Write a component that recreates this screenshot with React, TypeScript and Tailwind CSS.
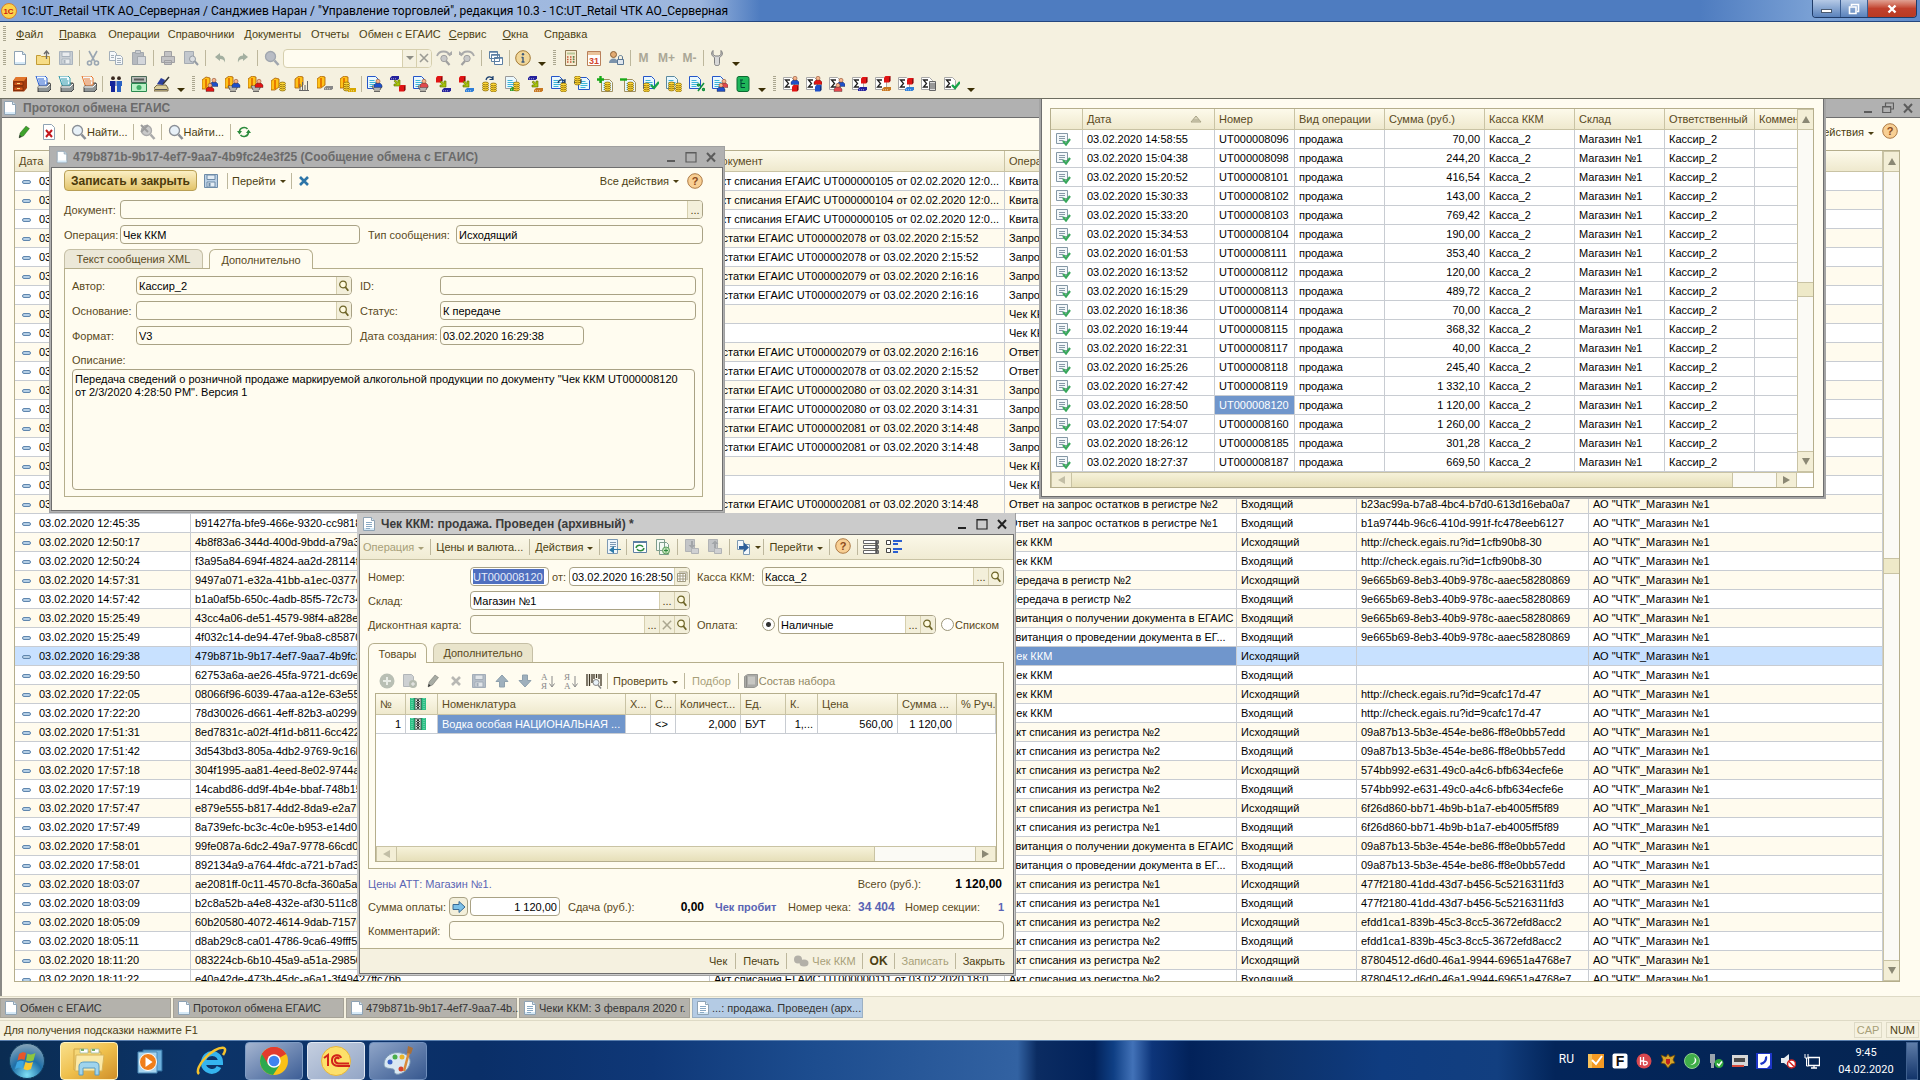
import React from 'react'

type Part = [name: string, x?: number, y?: number, color?: string]

// Small shapes that the toolbar pictures are assembled from, on a 16x16 field
const PartShape = ({ part }: { part: Part }) => {
  const [name, x = 0, y = 0, color = '#2456c9'] = part
  switch (name) {
    case 'doc':
      return (
        <g transform={`translate(${x} ${y})`}>
          <path d="M.5 .5h8l3 3v9h-11z" fill="#eaf8fd" stroke={color} />
          <path d="M2.5 4.5h5M2.5 6.5h7M2.5 8.5h7M2.5 10.5h5" stroke="#3cb4d8" />
        </g>
      )
    case 'page':
      return (
        <g transform={`translate(${x} ${y})`}>
          <path d="M.5 .5h8l3 3v9h-11z" fill="#fff" stroke="#a8a8a8" />
          <path d="M7 3H2.5l3 3.5-3 3.5H7" fill="none" stroke="#222" strokeWidth="1.3" />
        </g>
      )
    case 'man':
      return (
        <g transform={`translate(${x} ${y})`}>
          <path d="M0 8.5V6l2-2h4l2 2v2.5z" fill={color} stroke="#222a" strokeWidth=".5" />
          <circle cx="4" cy="2.3" r="2" fill="#f7b48c" stroke="#7a3b1a" strokeWidth=".5" />
        </g>
      )
    case 'coins':
      return (
        <g transform={`translate(${x} ${y})`} fill="#ffd83a" stroke="#8a6a00" strokeWidth=".8">
          <ellipse cx="3.5" cy="7.5" rx="3" ry="1.4" />
          <ellipse cx="3.5" cy="5.5" rx="3" ry="1.4" />
          <ellipse cx="3.5" cy="3.5" rx="3" ry="1.4" />
          <ellipse cx="3.5" cy="1.5" rx="3" ry="1.4" />
        </g>
      )
    case 'gold':
      return (
        <g transform={`translate(${x} ${y})`}>
          <path d="M0 3l4-3 4 1v8l-4 3H0z" fill="#ffc21a" stroke="#a85a00" strokeWidth=".8" />
          <path d="M4 2v9" stroke="#e77a00" strokeWidth="2" />
        </g>
      )
    case 'cart':
      return (
        <path
          transform={`translate(${x} ${y})`}
          d="M0 0h10l-2 4H2zM2 5.5h6M1 2h8"
          fill="#fff"
          stroke="#444"
          strokeWidth=".8"
        />
      )
    case 'cube':
      return (
        <g transform={`translate(${x} ${y})`}>
          <path d="M0 1.5L1.5 0H6.5V5L5 6.5H0z" fill={color} />
          <path d="M5 6.5V1.5L6.5 0V5z" fill="#0006" />
        </g>
      )
    case 'slab':
      return (
        <g transform={`translate(${x} ${y})`}>
          <path d="M0 2l2-2h7v2.5L7.5 4H0z" fill={color} />
          <path d="M1 2.8h6" stroke="#fff9" strokeDasharray="1 1" />
        </g>
      )
    case 'arrow':
      return (
        <path
          transform={`translate(${x} ${y})`}
          d="M0 1l1.5-1L4 2.5V0h2v6H0V4h2.5z"
          fill="#a8c40a"
          stroke="#5c6b00"
          strokeWidth=".6"
        />
      )
    case 'turn':
      return (
        <path
          transform={`translate(${x} ${y})`}
          d="M0 4C1 0 5 0 7 3M7 0v3.5H3.5"
          fill="none"
          stroke="#1b3f6e"
          strokeWidth="1.2"
        />
      )
    case 'check':
      return <path transform={`translate(${x} ${y})`} d="M0 3l3 3 5-6" fill="none" stroke="#16a34a" strokeWidth="2.4" />
    case 'plus':
      return <path d="M3.5 0v7M0 3.5h7" stroke="#17a817" strokeWidth="2.4" />
    case 'minus':
      return <path d="M0 3.5h7" stroke="#17a817" strokeWidth="2.4" />
    case 'percent':
      return (
        <g transform={`translate(${x} ${y})`} fill="none" stroke="#11903b" strokeWidth="1.5">
          <path d="M7 0L1 8" />
          <circle cx="1.5" cy="2" r="1" />
          <circle cx="6.5" cy="6.5" r="1" />
        </g>
      )
    case 'lines':
      return (
        <g transform={`translate(${x} ${y})`}>
          <path d="M.5 .5h6v9h-6z" fill="#ddd" stroke="#666" />
          <path d="M0 3h7M0 5h7M0 7h7" stroke="#555" />
        </g>
      )
    case 'pens':
      return <path transform={`translate(${x} ${y})`} d="M1 9V3M3.5 9V1M6 9V4M8.5 9V0M0 9.5h10" stroke="#666" fill="none" />
    case 'printer':
      return (
        <g>
          <path d="M3 11l3-4h9l1 4v2l-3 3H3z" fill="#8f9596" stroke="#222" strokeWidth=".8" />
          <path d="M3 11h9l3-3" stroke="#fff" fill="none" />
          <path d="M1 0h9l2 2v7H4z" fill="#f3fbff" stroke={color} />
          <path d="M3 3h6M3.5 5h7M4 7h6" stroke={color} />
        </g>
      )
    case 'tree':
      return (
        <g>
          <rect x="2" y=".5" width="12" height="15" rx="2" fill="#1fb65a" stroke="#0a6b30" />
          <path d="M6 4v7.5h4M6 7.5h4M5 4h3" stroke="#043" fill="none" />
        </g>
      )
    default:
      return null
  }
}

const Pic = ({ parts }: { parts: Part[] }) => (
  <svg viewBox="0 0 16 16" className="h-4 w-4 shrink-0">
    {parts.map((part, i) => (
      <PartShape key={i} part={part} />
    ))}
  </svg>
)

const RED = '#e01414'
const BLUE = '#1e50c8'
const PINK = '#e0484e'
const NAVY = '#24219c'

const SALES: Part[][] = [
  [['gold', 0, 1], ['man', 8, 2, BLUE], ['man', 4, 7, RED]],
  [['gold', 0, 0], ['cart', 3, 10], ['man', 7, 3, BLUE]],
  [['gold', 0, 0], ['cart', 3, 10], ['man', 7, 3, RED]],
  [['gold', 0, 2], ['coins', 8, 6]],
  [['gold', 1, 0], ['pens', 5, 5]],
  [['gold', 0, 0], ['slab', 7, 10, '#888']],
  [['gold', 0, 0], ['coins', 3, 6], ['slab', 8, 12, '#d8a800']],
]

const DOCS: Part[][] = [
  [['doc', 0, 0], ['cart', 5, 10], ['man', 7, 3, BLUE]],
  [['slab', 0, 0, NAVY], ['arrow', 4, 4], ['cube', 9, 9, RED]],
  [['doc', 0, 0], ['cart', 5, 10], ['man', 7, 3, PINK]],
  [['cube', 0, 0, RED], ['arrow', 4, 5], ['slab', 6, 12, NAVY]],
  [['cube', 0, 0, RED], ['arrow', 4, 5], ['slab', 6, 12, '#2f7fd8']],
  [['coins', 0, 6], ['coins', 8, 7], ['turn', 4, 0]],
  [['doc', 0, 0, '#9a9a9a'], ['slab', 5, 11, '#2fa02f'], ['coins', 8, 6]],
  [['slab', 0, 0, NAVY], ['arrow', 4, 5], ['slab', 6, 12, '#c87820']],
  [['doc', 0, 0], ['turn', 7, 3], ['coins', 9, 7]],
  [['doc', 4, 1], ['turn', 0, 3], ['coins', 0, 0]],
  [['doc', 4, 3, '#a09060'], ['plus'], ['coins', 7, 6]],
  [['doc', 4, 3, '#a09060'], ['minus'], ['coins', 7, 6]],
  [['doc', 0, 0], ['coins', 0, 7], ['check', 8, 6]],
  [['doc', 0, 0, '#5a8aa0'], ['coins', 2, 6], ['coins', 9, 7]],
  [['doc', 0, 0], ['percent', 8, 7]],
  [['doc', 0, 0], ['man', 8, 3, PINK], ['man', 5, 7, BLUE]],
  [['tree']],
]

const REPORTS: Part[][] = [
  [['page', 0, 1], ['man', 8, 0, BLUE], ['cube', 9, 9, RED]],
  [['page', 0, 1], ['man', 8, 0, RED], ['cube', 9, 9, BLUE]],
  [['page', 0, 1], ['man', 8, 2, BLUE], ['man', 5, 7, PINK]],
  [['page', 0, 1], ['cube', 9, 1, RED], ['slab', 6, 11, NAVY]],
  [['page', 0, 1], ['cube', 9, 0, RED], ['slab', 7, 11, '#c87820']],
  [['page', 0, 1], ['cube', 9, 2, RED], ['slab', 7, 11, '#2f7fd8']],
  [['page', 0, 1], ['lines', 8, 5]],
  [['page', 0, 1], ['check', 8, 6]],
]

const NewIcon = ({ lined = false, className = 'h-4 w-4' }) => (
  <svg viewBox="0 0 16 16" className={`${className} shrink-0`}>
    <path d="M2.5 1.5h8l3 3v10h-11z" fill="#fff" stroke="#8fa3b4" />
    <path d="M3 12h10v2H3z" fill="#d5e9f7" />
    <path d="M10.5 1.5v3h3" fill="#dcebf5" stroke="#8fa3b4" />
    {lined && <path d="M5 6.5h6M5 8.5h6M5 10.5h6M5 12.5h4" stroke="#8aa9c4" />}
  </svg>
)

const OpenIcon = () => (
  <svg viewBox="0 0 16 16" className="h-4 w-4">
    <path d="M1.5 5.5h4l1 1h8v8h-13z" fill="#f7dc85" stroke="#c29b35" />
    <path d="M11.5 9V2M9 4l2.5-3L14 4" fill="none" stroke="#6b6b6b" strokeWidth="1.3" />
  </svg>
)

const SaveIcon = ({ color = '#a9b3bd', inner = '#c9cfd4' }) => (
  <svg viewBox="0 0 16 16" className="h-4 w-4 shrink-0">
    <path d="M1.5 1.5h13v13h-13z" fill={inner} stroke={color} />
    <path d="M4 2h8v4.5H4zM4 9h8v5H4z" fill="#fff9" stroke={color} />
    <path d="M5.5 10v3.5h2V10z" fill={color} />
  </svg>
)

const CutIcon = () => (
  <svg viewBox="0 0 16 16" className="h-4 w-4" fill="none" stroke="#9aa6b2" strokeWidth="1.6">
    <path d="M4 1l5.5 10M12 1L6.5 11" />
    <circle cx="4.5" cy="13" r="2" />
    <circle cx="11.5" cy="13" r="2" />
  </svg>
)

const CopyIcon = () => (
  <svg viewBox="0 0 16 16" className="h-4 w-4" fill="#f6f8fa" stroke="#a3afba">
    <path d="M1.5 1.5h5l2 2v7h-7z" />
    <path d="M7.5 5.5h5l2 2v7h-7z" />
    <path d="M9 8.5h4M9 10.5h4M9 12.5h4M3 5.5h3M3 7.5h3" />
  </svg>
)

const PasteIcon = () => (
  <svg viewBox="0 0 16 16" className="h-4 w-4">
    <path d="M1.5 2.5h11v12h-11z" fill="#b5b9bf" stroke="#a3a8ae" />
    <path d="M4.5 .5h5v3h-5z" fill="#c9ccd0" stroke="#a3a8ae" />
    <path d="M6.5 6.5h8v8h-8z" fill="#d3d6db" stroke="#a3a8ae" />
  </svg>
)

const PostIcon = ({ up = false }) => (
  <svg viewBox="0 0 16 16" className="h-4 w-4">
    <path d="M1.5 .5h9v12h-9z" fill="#c3c5c7" stroke="#b1b3b5" />
    <path d="M7.5 9.5h7v5h-7z" fill="#cfd0d2" stroke="#b1b3b5" />
    <path d={up ? 'M7 9V5H4.500L8 1.500 11.500 5H9v4z' : 'M7 2v4H4.500L8 9.500 11.500 6H9V2z'} fill="#a2a5a8" />
  </svg>
)

const BookIcon = () => (
  <svg viewBox="0 0 16 16" className="h-4 w-4">
    <path d="M1.5 3.5l3-2h10v11l-3 2h-10z" fill="#a9a9a6" stroke="#979792" />
    <path d="M5 3.5h7v8H5z" fill="#c7c7c3" />
    <path d="M3.5 3v11" stroke="#8c8c88" />
  </svg>
)

const PrintIcon = () => (
  <svg viewBox="0 0 16 16" className="h-4 w-4" fill="#c3c3c5" stroke="#a0a0a3">
    <path d="M4.5 1.5h7v5h-7zM1.5 6.5h13v6h-13zM4.5 10.5h7v4h-7z" />
  </svg>
)

const PreviewIcon = () => (
  <svg viewBox="0 0 16 16" className="h-4 w-4">
    <path d="M1.5 1.5h9v12h-9z" fill="#c3c8ce" stroke="#a5abb2" />
    <circle cx="9.5" cy="9" r="3" fill="#dadde0" stroke="#959ca4" />
    <path d="M11.5 11l3.5 4" stroke="#959ca4" strokeWidth="2" />
  </svg>
)

const UndoIcon = ({ flip = false }) => (
  <svg viewBox="0 0 16 16" className={flip ? 'h-4 w-4 -scale-x-100' : 'h-4 w-4'}>
    <path d="M3 7l5-4v2.5c4 0 5.5 3 5 7-1-3-2.5-3.5-5-3.5v2z" fill="#a3afa0" />
  </svg>
)

const LensIcon = ({ glass = '#c4cfd6', rim = '#9aa4ac', crossed = false }) => (
  <svg viewBox="0 0 16 16" className="h-4 w-4 shrink-0">
    <circle cx="6.5" cy="6.5" r="5" fill={glass} stroke={rim} strokeWidth="1.3" />
    <path d="M10.5 10.5l4 4.5" stroke={rim} strokeWidth="2.6" />
    {crossed && <path d="M1 1l7 7M8 1L1 8" stroke="#9c9c9c" strokeWidth="2" />}
  </svg>
)

const SearchAgainIcon = ({ flip = false }) => (
  <svg viewBox="0 0 16 16" className={flip ? 'h-4 w-4 -scale-x-100' : 'h-4 w-4'}>
    <path d="M1 6c2-6 11-6 13 0" fill="none" stroke="#aaa" strokeWidth="1.8" />
    <path d="M11 5h5v-4z" fill="#aaa" />
    <circle cx="8" cy="8.5" r="3.2" fill="#c8c8c8" stroke="#a0a0a0" />
    <path d="M10 11l3.5 4" stroke="#a0a0a0" strokeWidth="2.2" />
  </svg>
)

const WindowsIcon = () => (
  <svg viewBox="0 0 16 16" className="h-4 w-4" fill="#fff" stroke="#5c7fa3">
    <path d="M1.5 1.5h8v7h-8zM3.5 4.5h8v7h-8zM6.5 7.5h8v7h-8z" />
    <path d="M1.5 2h8M3.5 5h8M6.5 8h8" strokeWidth="1.5" />
  </svg>
)

const InfoIcon = () => (
  <svg viewBox="0 0 16 16" className="h-4 w-4">
    <circle cx="8" cy="8" r="7.3" fill="#f1d79a" stroke="#a37a35" />
    <path d="M8 7v5M6.5 7.5H8M6.5 12h3" stroke="#3e5a7a" strokeWidth="1.4" />
    <circle cx="8" cy="4.3" r="1.2" fill="#3e5a7a" />
  </svg>
)

const CalcIcon = () => (
  <svg viewBox="0 0 16 16" className="h-4 w-4">
    <path d="M2.5 .5h11v15h-11z" fill="#f7ecd0" stroke="#8f7a55" />
    <path d="M4 3.5h8" stroke="#b9c79a" strokeWidth="2" />
    <path d="M4 7h8M4 9.5h8M4 12h8" stroke="#c25638" strokeWidth="1.5" strokeDasharray="1.5 1.5" />
    <path d="M10.5 6v7" stroke="#4b9157" strokeWidth="1.5" strokeDasharray="1.5 1" />
  </svg>
)

const CalendarIcon = () => (
  <svg viewBox="0 0 16 16" className="h-4 w-4">
    <path d="M1.5 1.5h13v14h-13z" fill="#fff" stroke="#b9805a" />
    <path d="M2 2h12v3H2z" fill="#eac39a" />
    <text x="8" y="14" fontSize="9" textAnchor="middle" fill="#d4452a" fontFamily="Liberation Sans, sans-serif" fontWeight="bold">
      31
    </text>
  </svg>
)

const UserLockIcon = () => (
  <svg viewBox="0 0 16 16" className="h-4 w-4">
    <path d="M0 13c0-6 9-6 9 0z" fill="#7a92ab" />
    <circle cx="4.5" cy="4.5" r="3" fill="#e2ab72" stroke="#8a6135" />
    <path d="M8.5 9.5h6v5h-6z" fill="#dfe6ed" stroke="#5c7894" />
    <path d="M9.5 9.5V7c0-2 4-2 4 0v2.5" fill="none" stroke="#5c7894" />
  </svg>
)

const WrenchIcon = () => (
  <svg viewBox="0 0 16 16" className="h-4 w-4">
    <path
      d="M4 .5v4l2 1.500h4l2-1.500v-4c2 2 2 5-1.500 7v6c0 3-5 3-5 0v-6C2 5.500 2 2.500 4 .5z"
      fill="#d8d8d8"
      stroke="#7d7d7d"
    />
  </svg>
)

const CabinetIcon = () => (
  <svg viewBox="0 0 16 16" className="h-4 w-4">
    <path d="M1 5l3-4h11v11l-3 3.5H1z" fill="#a33c10" />
    <path d="M4 1h11l-3 4H1z" fill="#e2762c" />
    <path d="M2 6h9v3.5H2zM2 11h9v3.5H2z" fill="#d1541a" stroke="#6d2404" strokeWidth=".7" />
    <path d="M5 7.5h3M5 12.5h3" stroke="#ffe08a" />
  </svg>
)

const PeopleIcon = () => (
  <svg viewBox="0 0 16 16" className="h-4 w-4">
    <circle cx="5" cy="2.2" r="1.9" fill="#3a2a20" />
    <circle cx="11" cy="2.2" r="1.9" fill="#3a2a20" />
    <path d="M2 5h5.5v5H7v6H3v-6H2z" fill="#14259a" />
    <path d="M8.5 5H14v5h-1v6H9v-6h-.5z" fill="#2a62c4" />
  </svg>
)

const MoneyIcon = () => (
  <svg viewBox="0 0 16 16" className="h-4 w-4">
    <path d="M.5 .5h15v6H.5z" fill="#b8bcb8" stroke="#4a6a58" />
    <path d="M.5 7.5h15v8H.5z" fill="#baf0c6" stroke="#2a8a50" />
    <path d="M3 3.5h10" stroke="#5b5b5b" strokeWidth="2" />
    <circle cx="8" cy="11.5" r="2.5" fill="#3fae66" />
  </svg>
)

const RegisterIcon = () => (
  <svg viewBox="0 0 16 16" className="h-4 w-4">
    <path d="M0 12l3-3h9l2 3v3H0z" fill="#dccf9a" stroke="#55482a" strokeWidth=".8" />
    <path d="M3 8l4-6 4 2-2 5z" fill="#2b3f9e" />
    <path d="M9 8l6-7" stroke="#333" strokeWidth="1.5" />
    <path d="M1 13.5h12" stroke="#555" />
  </svg>
)

const LoupeIcon = () => (
  <svg viewBox="0 0 12 12" className="h-3 w-3">
    <circle cx="5" cy="4.5" r="3.3" fill="#fffbe0" stroke="#6d6427" strokeWidth="1.2" />
    <path d="M7.3 7l3 3.8" stroke="#6d6427" strokeWidth="1.8" />
  </svg>
)

const HelpButton = () => (
  <button type="button" aria-label="Справка" className="h-4 w-4 shrink-0">
    <svg viewBox="0 0 16 16" className="h-4 w-4">
      <circle cx="8" cy="8" r="7.3" fill="#f8cf94" stroke="#ad7a45" />
      <text x="8" y="12" fontSize="11" textAnchor="middle" fill="#8b4a1c" fontFamily="Liberation Sans, sans-serif" fontWeight="bold">
        ?
      </text>
    </svg>
  </button>
)

const PencilIcon = ({ color = '#3fa32c' }) => (
  <svg viewBox="0 0 16 16" className="h-4 w-4">
    <path d="M3 14l1-5 6-7 3.5 2.5-6 7.5z" fill={color} stroke="#0005" strokeWidth=".7" />
    <path d="M3 14l.7-3 2 1.5z" fill="#333" />
  </svg>
)

const DeleteIcon = () => (
  <svg viewBox="0 0 16 16" className="h-4 w-4">
    <path d="M2.5 .5h8l3 3v12h-11z" fill="#fff" stroke="#8fa3b4" />
    <path d="M5 6l6 7M11 6l-6 7" stroke="#c3171c" strokeWidth="2" />
  </svg>
)

const RefreshIcon = () => (
  <svg viewBox="0 0 16 16" className="h-4 w-4" fill="none" stroke="#2c8b3c" strokeWidth="1.6">
    <path d="M3.5 8c0-5 6-5.500 8-3M12.5 8c0 5-6 5.500-8 3" />
    <path d="M1 7h5l-2.500 3.500zM10 9h5l-2.500-3.500z" fill="#2c8b3c" stroke="none" />
  </svg>
)

const CrossIcon = ({ color = '#2d75a8' }) => (
  <svg viewBox="0 0 12 12" className="h-3 w-3">
    <path d="M2 2l8 8M10 2l-8 8" stroke={color} strokeWidth="2.6" />
  </svg>
)

const ArrowIcon = ({ down = false }) => (
  <svg viewBox="0 0 16 16" className={down ? 'h-4 w-4 rotate-180' : 'h-4 w-4'}>
    <path d="M8 2l6 6.5h-3.5V14h-5V8.5H2z" fill="#9fb0bd" stroke="#8ea0ad" />
  </svg>
)

const Sep = ({ wide = false }) => (
  <span className={`flex justify-center shrink-0 ${wide ? 'w-[6px]' : 'w-1'}`}>
    <span className="h-4 w-px bg-[#bdb79c]" />
  </span>
)

const Grip = ({ first = false }) => (
  <span
    className={`h-4 w-[3px] shrink-0 bg-[repeating-linear-gradient(180deg,#aaa68f_0,#aaa68f_1px,transparent_1px,transparent_2px)] ${
      first ? 'mr-[2px] ml-[3px]' : 'mr-[3px] ml-1'
    }`}
  />
)

const More = () => (
  <span className="flex h-4 w-[15px] shrink-0 items-end justify-center">
    <span className="border-x-4 border-t-4 border-x-transparent border-t-[#3b2f05]" />
  </span>
)

const Tool = ({ label, children }: { label: string; children: React.ReactNode }) => (
  <button type="button" aria-label={label} className="flex h-5 w-[23px] shrink-0 items-center justify-center">
    {children}
  </button>
)

const Caret = ({ faded = false, tight = false }) => (
  <span
    className={`inline-block border-x-[3px] border-t-[3px] border-x-transparent align-middle ${tight ? '' : 'ml-1'} ${
      faded ? 'border-t-[#a79f78]' : 'border-t-[#4c3f12]'
    }`}
  />
)

const MENU: [before: string, hot: string, after: string, margin: string][] = [
  ['', 'Ф', 'айл', 'ml-2'],
  ['', 'П', 'равка', 'ml-4'],
  ['Операции', '', '', 'ml-3'],
  ['Справочники', '', '', 'ml-2'],
  ['Документы', '', '', 'ml-[10px]'],
  ['Отчеты', '', '', 'ml-[10px]'],
  ['Обмен с ЕГАИС', '', '', 'ml-[10px]'],
  ['', 'С', 'ервис', 'ml-2'],
  ['', 'О', 'кна', 'ml-4'],
  ['Сп', 'р', 'авка', 'ml-4'],
]

const TitleBar = () => (
  <header className="flex h-[22px] shrink-0 items-start border-b border-[#24477f] bg-[linear-gradient(90deg,#86a5d6_0,#a3bbe0_400px,#9cb6de_700px,#4e7cc0_760px,#4e7cc0_1700px,#7da3d6_1820px,#5f8bca_100%)]">
    <div className="flex h-[21px] flex-1 items-center gap-1 pl-[1px]">
      <svg viewBox="0 0 16 16" className="h-4 w-4">
        <circle cx="8" cy="8" r="7.5" fill="#fbd34a" stroke="#d9822b" />
        <text x="7.5" y="11" fontSize="8" textAnchor="middle" fill="#cc1a12" fontFamily="Liberation Sans, sans-serif" fontWeight="bold">
          1C
        </text>
      </svg>
      <h1 className="font-['Roboto','Noto_Sans',sans-serif] text-[12px] whitespace-nowrap text-black">
        1C:UT_Retail ЧТК АО_Серверная / Санджиев Наран / "Управление торговлей", редакция 10.3 - 1C:UT_Retail ЧТК АО_Серверная
      </h1>
    </div>
    <div className="mr-[3px] flex h-[18px] overflow-hidden rounded-b border border-t-0 border-[#1f3b68]">
      <button type="button" aria-label="Свернуть" className="flex w-7 items-center justify-center border-r border-[#3a5c90] bg-linear-to-b from-[#b5c9e6] to-[#5a82bb]">
        <span className="mt-1 h-1 w-[11px] border border-[#4a5a70] bg-white" />
      </button>
      <button type="button" aria-label="Развернуть" className="flex w-[27px] items-center justify-center border-r border-[#3a5c90] bg-linear-to-b from-[#b5c9e6] to-[#5a82bb]">
        <svg viewBox="0 0 12 12" className="h-3 w-3" fill="none" stroke="#fff" strokeWidth="1.6">
          <path d="M3.5 3V1.5h7v7H9M1.5 4h6.5v6.5H1.5z" />
        </svg>
      </button>
      <button type="button" aria-label="Закрыть" className="flex w-12 items-center justify-center bg-linear-to-b from-[#e0a193] via-[#c1402c] to-[#b93a22]">
        <svg viewBox="0 0 12 12" className="h-3 w-3">
          <path d="M2.5 2.5l7 7M9.5 2.5l-7 7" stroke="#fff" strokeWidth="2.4" />
        </svg>
      </button>
    </div>
  </header>
)

const Toolbars = () => (
  <div className="shrink-0 border-b border-[#6d6d60] bg-[#f5f1e0]">
    <nav className="flex h-6 items-center">
      <Grip first />
      {MENU.map(([before, hot, after, margin]) => (
        <a key={before + hot + after} href="#" className={`${margin} text-[#4c3f12]`}>
          {before}
          <span className="underline">{hot}</span>
          {after}
        </a>
      ))}
    </nav>
    <div className="flex h-6 items-center">
      <Grip first />
      <div className="flex items-center">
        <Tool label="Новый"><NewIcon /></Tool>
        <Tool label="Открыть"><OpenIcon /></Tool>
        <Tool label="Сохранить"><SaveIcon /></Tool>
        <Sep />
        <Tool label="Вырезать"><CutIcon /></Tool>
        <Tool label="Копировать"><CopyIcon /></Tool>
        <Tool label="Вставить"><PasteIcon /></Tool>
        <Sep wide />
        <Tool label="Печать"><PrintIcon /></Tool>
        <Tool label="Просмотр"><PreviewIcon /></Tool>
        <Sep wide />
        <Tool label="Отменить"><UndoIcon /></Tool>
        <Tool label="Вернуть"><UndoIcon flip /></Tool>
        <Sep wide />
        <Tool label="Найти"><LensIcon glass="#b8bcc4" rim="#a0a6ae" /></Tool>
      </div>
      <div className="flex h-[19px] w-[149px] overflow-hidden rounded border border-[#d6cfae] bg-[#fffcf0]">
        <input aria-label="Поиск" className="min-w-0 flex-1 bg-transparent px-1 outline-none" />
        <button type="button" aria-label="Список" className="flex w-[14px] items-center justify-center border-l border-[#d6cfae] bg-[#f5f1e0]">
          <span className="border-x-4 border-t-4 border-x-transparent border-t-[#8e8e86]" />
        </button>
        <button type="button" aria-label="Очистить" className="flex w-[15px] items-center justify-center border-l border-[#d6cfae] bg-[#f5f1e0]">
          <svg viewBox="0 0 12 12" className="h-3 w-3"><path d="M2 2l8 8M10 2l-8 8" stroke="#9b9b94" strokeWidth="1.6" /></svg>
        </button>
      </div>
      <Tool label="Найти следующий"><SearchAgainIcon /></Tool>
      <Tool label="Найти предыдущий"><SearchAgainIcon flip /></Tool>
      <Sep wide />
      <Tool label="Окна"><WindowsIcon /></Tool>
      <Sep />
      <Tool label="Справка"><InfoIcon /></Tool>
      <More />
      <Grip />
      <Tool label="Калькулятор"><CalcIcon /></Tool>
      <Tool label="Календарь"><CalendarIcon /></Tool>
      <Tool label="Пользователь"><UserLockIcon /></Tool>
      <Sep />
      <div className="flex text-[12px] font-bold text-[#aaa796]">
        <button type="button" className="w-[23px]">M</button>
        <button type="button" className="w-[23px]">M+</button>
        <button type="button" className="w-[23px]">M-</button>
      </div>
      <Sep />
      <Tool label="Сервис"><WrenchIcon /></Tool>
      <More />
    </div>
    <div className="flex h-7 items-center">
      <Grip first />
      <Tool label="Константы"><CabinetIcon /></Tool>
      <Tool label="Печать таблицы"><Pic parts={[['printer', 0, 0, '#2a5ed0']]} /></Tool>
      <Tool label="Печать документа"><Pic parts={[['printer', 0, 0, '#2f97a8']]} /></Tool>
      <Tool label="Печать ценников"><Pic parts={[['printer', 0, 0, '#e8742a']]} /></Tool>
      <Sep />
      <Tool label="Контрагенты"><PeopleIcon /></Tool>
      <Tool label="Касса"><MoneyIcon /></Tool>
      <Tool label="Рабочее место"><RegisterIcon /></Tool>
      <More />
      <Grip />
      {SALES.map((parts, i) => (
        <Tool key={i} label={`Журнал ${i + 1}`}><Pic parts={parts} /></Tool>
      ))}
      <Sep />
      {DOCS.map((parts, i) => (
        <Tool key={i} label={`Документ ${i + 1}`}><Pic parts={parts} /></Tool>
      ))}
      <More />
      <Grip />
      {REPORTS.map((parts, i) => (
        <Tool key={i} label={`Отчет ${i + 1}`}><Pic parts={parts} /></Tool>
      ))}
      <More />
    </div>
  </div>
)

const ACT = 'Акт списания из регистра №'
const IN = 'Входящий'
const OUT = 'Исходящий'
const CHECK_1 = 'http://check.egais.ru?id=1cfb90b8-30'
const CHECK_2 = 'http://check.egais.ru?id=9cafc17d-47'
const G9E = '9e665b69-8eb3-40b9-978c-aaec58280869'
const G09 = '09a87b13-5b3e-454e-be86-ff8e0bb57edd'
const GOT = 'Квитанция о получении документа в ЕГАИС'
const DONE = 'Квитанция о проведении документа в ЕГ...'
const ASK = 'Запрос остатков в регистре'
const REPLY = 'Ответ на запрос остатков'

const rest = (n: string, time: string) => `Остатки ЕГАИС UT00000${n} от 03.02.2020 ${time}`

// time, id, document, operation, direction, reply id
const EXCHANGE: string[][] = [
  ['', '', 'Акт списания ЕГАИС UT000000105 от 02.02.2020 12:0...', GOT, '', ''],
  ['', '', 'Акт списания ЕГАИС UT000000104 от 02.02.2020 12:0...', GOT, '', ''],
  ['', '', 'Акт списания ЕГАИС UT000000105 от 02.02.2020 12:0...', GOT, '', ''],
  ['', '', rest('2078', '2:15:52'), ASK, '', ''],
  ['', '', rest('2078', '2:15:52'), ASK, '', ''],
  ['', '', rest('2079', '2:16:16'), ASK, '', ''],
  ['', '', rest('2079', '2:16:16'), ASK, '', ''],
  ['', '', '', 'Чек ККМ', '', ''],
  ['', '', '', 'Чек ККМ', '', ''],
  ['', '', rest('2079', '2:16:16'), REPLY, '', ''],
  ['', '', rest('2078', '2:15:52'), REPLY, '', ''],
  ['', '', rest('2080', '3:14:31'), ASK, '', ''],
  ['', '', rest('2080', '3:14:31'), ASK, '', ''],
  ['', '', rest('2081', '3:14:48'), ASK, '', ''],
  ['', '', rest('2081', '3:14:48'), ASK, '', ''],
  ['', '', '', 'Чек ККМ', '', ''],
  ['', '', '', 'Чек ККМ', '', ''],
  ['', '', rest('2081', '3:14:48'), REPLY + ' в регистре №2', IN, 'b23ac99a-b7a8-4bc4-b7d0-613d16eba0a7'],
  ['12:45:35', 'b91427fa-bfe9-466e-9320-cc9818', '', REPLY + ' в регистре №1', IN, 'b1a9744b-96c6-410d-991f-fc478eeb6127'],
  ['12:50:17', '4b8f83a6-344d-400d-9bdd-a79a33', '', 'Чек ККМ', OUT, CHECK_1],
  ['12:50:24', 'f3a95a84-694f-4824-aa2d-28114fd', '', 'Чек ККМ', IN, CHECK_1],
  ['14:57:31', '9497a071-e32a-41bb-a1ec-0377e', '', 'Передача в регистр №2', OUT, G9E],
  ['14:57:42', 'b1a0af5b-650c-4adb-85f5-72c734', '', 'Передача в регистр №2', IN, G9E],
  ['15:25:49', '43cc4a06-de51-4579-98f4-a828ed', '', GOT, IN, G9E],
  ['15:25:49', '4f032c14-de94-47ef-9ba8-c85870', '', DONE, IN, G9E],
  ['16:29:38', '479b871b-9b17-4ef7-9aa7-4b9fc24e3f25', '', 'Чек ККМ', OUT, ''],
  ['16:29:50', '62753a6a-ae26-45fa-9721-dc69ed', '', 'Чек ККМ', IN, ''],
  ['17:22:05', '08066f96-6039-47aa-a12e-63e556', '', 'Чек ККМ', OUT, CHECK_2],
  ['17:22:20', '78d30026-d661-4eff-82b3-a02990', '', 'Чек ККМ', IN, CHECK_2],
  ['17:51:31', '8ed7831c-a02f-4f1d-b811-6cc422', '', ACT + '2', OUT, G09],
  ['17:51:42', '3d543bd3-805a-4db2-9769-9c16b', '', ACT + '2', IN, G09],
  ['17:57:18', '304f1995-aa81-4eed-8e02-9744af', '', ACT + '2', OUT, '574bb992-e631-49c0-a4c6-bfb634ecfe6e'],
  ['17:57:19', '14cabd86-dd9f-4b4e-bbaf-748b15', '', ACT + '2', IN, '574bb992-e631-49c0-a4c6-bfb634ecfe6e'],
  ['17:57:47', 'e879e555-b817-4dd2-8da9-e2a79', '', ACT + '1', OUT, '6f26d860-bb71-4b9b-b1a7-eb4005ff5f89'],
  ['17:57:49', '8a739efc-bc3c-4c0e-b953-e14d03', '', ACT + '1', IN, '6f26d860-bb71-4b9b-b1a7-eb4005ff5f89'],
  ['17:58:01', '99fe087a-6dc2-49a7-9778-66cd08', '', GOT, IN, G09],
  ['17:58:01', '892134a9-a764-4fdc-a721-b7ad38', '', DONE, IN, G09],
  ['18:03:07', 'ae2081ff-0c11-4570-8cfa-360a5a8', '', ACT + '1', OUT, '477f2180-41dd-43d7-b456-5c5216311fd3'],
  ['18:03:09', 'b2c8a52b-a4e8-432e-af30-511c8c', '', ACT + '1', IN, '477f2180-41dd-43d7-b456-5c5216311fd3'],
  ['18:05:09', '60b20580-4072-4614-9dab-71570', '', ACT + '2', OUT, 'efdd1ca1-839b-45c3-8cc5-3672efd8acc2'],
  ['18:05:11', 'd8ab29c8-ca01-4786-9ca6-49fff5f', '', ACT + '2', IN, 'efdd1ca1-839b-45c3-8cc5-3672efd8acc2'],
  ['18:11:20', '083224cb-6b10-45a9-a51a-29850', '', ACT + '2', OUT, '87804512-d6d0-46a1-9944-69651a4768e7'],
  ['18:11:22', 'e40a42de-473b-45dc-a6a1-3f49427ffc7bb', 'Акт списания ЕГАИС UT000000111 от 03.02.2020 18:0...', ACT + '2', IN, '87804512-d6d0-46a1-9944-69651a4768e7'],
]

const TH = 'border-r border-b border-[#c9c3a4] px-1 py-0 text-left font-normal text-[#5a4a1c] overflow-hidden whitespace-nowrap'
const TD = 'border-r border-b border-[#c8ccd2] px-1 py-0 overflow-hidden whitespace-nowrap'
const HEAD_BG = 'bg-linear-to-b from-[#fdfaeb] to-[#eee8cc]'

const ScrollButton = ({ dir, label }: { dir: 'up' | 'down' | 'left' | 'right'; label: string }) => {
  const marks = {
    up: 'border-x-4 border-b-[7px] border-x-transparent border-b-[#8b8874]',
    down: 'border-x-4 border-t-[7px] border-x-transparent border-t-[#8b8874]',
    left: 'border-y-4 border-r-[7px] border-y-transparent border-r-[#c2bea6]',
    right: 'border-y-4 border-l-[7px] border-y-transparent border-l-[#8b8874]',
  }
  const vertical = dir === 'up' || dir === 'down'
  return (
    <button
      type="button"
      aria-label={label}
      className={`flex shrink-0 items-center justify-center border-[#c9c3a4] bg-[#f3eed6] ${
        vertical ? 'h-[21px] w-full border-y' : 'h-full w-[21px] border-x'
      }`}
    >
      <span className={marks[dir]} />
    </button>
  )
}

const WindowControls = ({ restore = false, color = '#4c4c4c' }) => (
  <div className="flex items-center gap-[9px] pr-[7px]">
    {['Свернуть', 'Развернуть', 'Закрыть'].map((label, i) => (
      <button key={label} type="button" aria-label={label} className="h-3 w-[11px]">
        <svg viewBox="0 0 12 12" className="h-3 w-3" fill="none" stroke={color}>
          {i === 0 && <path d="M2 10h8" strokeWidth="2" />}
          {i === 1 && !restore && <path d="M1 1.5h10v9.5H1zM1 2h10" strokeWidth="1.2" />}
          {i === 1 && restore && <path d="M3.5 4V1h8v6H9M.7 4.5h8v6h-8zM.7 5h8" strokeWidth="1.2" />}
          {i === 2 && <path d="M2 2l8 8.5M10 2l-8 8.5" strokeWidth="2" />}
        </svg>
      </button>
    ))}
  </div>
)

const ExchangeLog = () => (
  <section className="flex h-full flex-col border-l-2 border-[#8a8a86] bg-[#fffcf0]">
    <header className="flex h-[19px] shrink-0 items-center border-b border-[#6e6e6e] bg-[#b1b1b1]">
      <NewIcon />
      <h2 className="ml-[5px] flex-1 text-[12px] font-bold text-[#6a6a6a]">Протокол обмена ЕГАИС</h2>
      <WindowControls restore color="#5c5c5c" />
    </header>
    <div className="flex h-8 shrink-0 items-center pb-1 text-[#4c3f12]">
      <button type="button" aria-label="Изменить" className="ml-[14px]"><PencilIcon /></button>
      <button type="button" aria-label="Удалить" className="mr-1 ml-[9px]"><DeleteIcon /></button>
      <Sep wide />
      <button type="button" className="mx-1 flex items-center">
        <LensIcon glass="#e8f1f8" rim="#8a8f96" />
        Найти...
      </button>
      <Sep />
      <button type="button" aria-label="Отключить поиск" className="mx-1"><LensIcon glass="#c9c9c9" rim="#aaa" crossed /></button>
      <Sep />
      <button type="button" className="mx-1 flex items-center">
        <LensIcon glass="#e8f1f8" rim="#8a8f96" />
        Найти...
      </button>
      <Sep />
      <button type="button" aria-label="Обновить" className="ml-1"><RefreshIcon /></button>
      <button type="button" className="mr-2 ml-auto">
        Все действия
        <Caret />
      </button>
      <span className="mr-[22px]"><HelpButton /></span>
    </div>
    <div className="mr-5 mb-[14px] ml-3 flex min-h-0 flex-1 overflow-hidden border border-[#b5ae8c]">
      <div className="min-w-0 flex-1 overflow-hidden">
        <table className="w-full table-fixed border-separate border-spacing-0">
          <colgroup>
            <col className="w-[176px]" />
            <col className="w-[519px]" />
            <col className="w-[295px]" />
            <col className="w-[232px]" />
            <col className="w-[120px]" />
            <col className="w-[232px]" />
            <col />
          </colgroup>
          <thead>
            <tr className={`h-[21px] ${HEAD_BG}`}>
              <th className={TH}>Дата</th>
              <th className={TH} />
              <th className={TH}>Документ</th>
              <th className={TH}>Операция</th>
              <th className={TH} />
              <th className={TH} />
              <th className={TH} />
            </tr>
          </thead>
          <tbody>
            {EXCHANGE.map(([time, id, doc, op, dir, reply], i) => {
              const current = time === '16:29:38'
              return (
                <tr key={i} className={`h-[19px] ${current ? 'bg-[#c8e1ff]' : i % 2 ? 'bg-[#fffbee]' : 'bg-white'}`}>
                  <td className={`${TD} pl-[7px]`}>
                    <span className="mr-2 inline-block h-1 w-[9px] rounded-xs border border-[#5f86ae] bg-[#b5cfe6] align-middle" />
                    03.02.2020 {time}
                  </td>
                  <td className={TD}>{id}</td>
                  <td className={TD}>{doc}</td>
                  <td className={current ? `${TD} bg-[#7096cc] text-white` : TD}>{op}</td>
                  <td className={TD}>{dir}</td>
                  <td className={TD}>{reply}</td>
                  <td className={TD}>{dir && 'АО "ЧТК"_Магазин №1'}</td>
                </tr>
              )
            })}
          </tbody>
        </table>
      </div>
      <div className="flex w-4 shrink-0 flex-col border-l border-[#c9c3a4] bg-[#fbfaf5]">
        <ScrollButton dir="up" label="Вверх" />
        <div className="flex-1" />
        <div className="h-4 border-y border-[#c9c3a4] bg-[#eee9c8]" />
        <div className="flex-1" />
        <ScrollButton dir="down" label="Вниз" />
      </div>
    </div>
  </section>
)

interface FieldProps {
  id: string
  value?: string
  className?: string
  align?: string
  buttons?: ('dots' | 'loupe' | 'clear' | 'calendar')[]
  selected?: boolean
  plain?: boolean
}

const Field = ({ id, value = '', className = '', align = '', buttons = [], selected = false, plain = false }: FieldProps) => (
  <div
    className={`flex h-[19px] min-w-0 overflow-hidden rounded border border-[#a9a285] ${
      plain ? 'bg-[#fffcf0]' : 'bg-white'
    } ${className}`}
  >
    <input
      id={id}
      readOnly
      defaultValue={value}
      className={`min-w-0 outline-none ${
        selected ? 'my-px ml-[2px] w-[71px] bg-[#4f6fbf] text-[#e6ecfa]' : `flex-1 bg-transparent pl-[2px] ${align}`
      }`}
    />
    {buttons.map((kind) => (
      <button
        key={kind}
        type="button"
        aria-label={kind === 'loupe' ? 'Открыть' : kind === 'clear' ? 'Очистить' : 'Выбрать'}
        className="flex w-[15px] shrink-0 items-center justify-center border-l border-[#d6cfae] bg-[#f3efda] text-[#4c3f12]"
      >
        {kind === 'dots' && '...'}
        {kind === 'loupe' && <LoupeIcon />}
        {kind === 'clear' && <svg viewBox="0 0 12 12" className="h-[10px] w-[10px]"><path d="M1 1l10 10M11 1L1 11" stroke="#aaa68f" strokeWidth="1.8" /></svg>}
        {kind === 'calendar' && (
          <svg viewBox="0 0 12 12" className="h-3 w-3" fill="#fff" stroke="#a09a80">
            <path d="M1.5 2.5h8v8h-8zM3 1h8v8M1.5 5h8M1.5 8h8M4 2.5v8M7 2.5v8" />
          </svg>
        )}
      </button>
    ))}
  </div>
)

const LABEL = 'text-[#5a4a1c] whitespace-nowrap shrink-0'

const MessageWindow = () => (
  <section className="absolute top-[47px] left-[49px] flex h-[367px] w-[676px] flex-col bg-[#b1b1b1] p-[2px] pt-0 shadow-[inset_0_0_0_1px_#a0a0a0]">
    <header className="flex h-[21px] shrink-0 items-center">
      <NewIcon className="ml-1 h-[14px] w-[14px]" />
      <h2 className="ml-1 flex-1 text-[12px] font-bold text-[#6a6a6a]">479b871b-9b17-4ef7-9aa7-4b9fc24e3f25 (Сообщение обмена с ЕГАИС)</h2>
      <WindowControls color="#5c5c5c" />
    </header>
    <div className="flex-1 border border-[#6e6e6e] bg-[#fffcf0] pt-[2px] pr-[19px] pl-3">
      <div className="flex h-[21px] items-center text-[#4c3f12]">
        <button
          type="button"
          className="h-full w-[133px] rounded-sm border border-[#b89f55] bg-linear-to-b from-[#fbefc4] to-[#e3c469] text-[12px] font-bold text-[#4c3a0a]"
        >
          Записать и закрыть
        </button>
        <button type="button" aria-label="Записать" className="mx-[6px]"><SaveIcon color="#6f8ca8" inner="#bcd1e6" /></button>
        <Sep />
        <button type="button" className="mr-1 ml-[3px]">
          Перейти
          <Caret />
        </button>
        <Sep />
        <button type="button" aria-label="Закрыть" className="ml-1"><CrossIcon /></button>
        <button type="button" className="mr-2 ml-auto">
          Все действия
          <Caret />
        </button>
        <HelpButton />
      </div>
      <div className="mt-[9px] flex items-center">
        <label htmlFor="msg-doc" className={`w-14 ${LABEL}`}>Документ:</label>
        <Field id="msg-doc" className="flex-1" plain buttons={['dots']} />
      </div>
      <div className="mt-[6px] flex items-center">
        <label htmlFor="msg-op" className={`w-14 ${LABEL}`}>Операция:</label>
        <Field id="msg-op" value="Чек ККМ" className="w-60" plain />
        <label htmlFor="msg-type" className={`ml-2 w-[88px] ${LABEL}`}>Тип сообщения:</label>
        <Field id="msg-type" value="Исходящий" className="flex-1" plain />
      </div>
      <div role="tablist" className="mt-[5px] flex h-[19px] gap-[6px]">
        <button type="button" role="tab" className="w-[139px] rounded-t-md border border-b-0 border-[#c5bfa5] bg-[#ece8d8] text-[#5a4a1c]">Текст сообщения XML</button>
        <button type="button" role="tab" className="-mb-px w-[104px] rounded-t-md border border-b-0 border-[#b5ae8c] bg-[#fffcf0] text-[#5a4a1c]">Дополнительно</button>
      </div>
      <div className="h-[229px] border border-[#b5ae8c] p-[7px]">
        <div className="grid grid-cols-[64px_216px_88px_256px] gap-y-[6px]">
          <label htmlFor="author" className={`self-center ${LABEL}`}>Автор:</label>
          <Field id="author" value="Кассир_2" plain buttons={['loupe']} />
          <label htmlFor="msg-id" className={`self-center pl-2 ${LABEL}`}>ID:</label>
          <Field id="msg-id" plain />
          <label htmlFor="base" className={`self-center ${LABEL}`}>Основание:</label>
          <Field id="base" plain buttons={['loupe']} />
          <label htmlFor="state" className={`self-center pl-2 ${LABEL}`}>Статус:</label>
          <Field id="state" value="К передаче" plain />
          <label htmlFor="format" className={`self-center ${LABEL}`}>Формат:</label>
          <Field id="format" value="V3" plain />
          <label htmlFor="created" className={`self-center pl-2 ${LABEL}`}>Дата создания:</label>
          <Field id="created" value="03.02.2020 16:29:38" className="w-36" plain />
        </div>
        <label htmlFor="descr" className={`mt-2 block leading-[14px] ${LABEL}`}>Описание:</label>
        <textarea
          id="descr"
          readOnly
          className="mt-[2px] block h-[121px] w-full resize-none rounded border border-[#a9a285] bg-transparent px-[2px] py-[3px] leading-[13px] outline-none"
          defaultValue={'Передача сведений о розничной продаже маркируемой алкогольной продукции по документу "Чек ККМ UT000008120\nот 2/3/2020 4:28:50 PM". Версия 1'}
        />
      </div>
    </div>
  </section>
)

const RECEIPTS: [time: string, no: string, sum: string][] = [
  ['14:58:55', '8096', '70,00'],
  ['15:04:38', '8098', '244,20'],
  ['15:20:52', '8101', '416,54'],
  ['15:30:33', '8102', '143,00'],
  ['15:33:20', '8103', '769,42'],
  ['15:34:53', '8104', '190,00'],
  ['16:01:53', '8111', '353,40'],
  ['16:13:52', '8112', '120,00'],
  ['16:15:29', '8113', '489,72'],
  ['16:18:36', '8114', '70,00'],
  ['16:19:44', '8115', '368,32'],
  ['16:22:31', '8117', '40,00'],
  ['16:25:26', '8118', '245,40'],
  ['16:27:42', '8119', '1 332,10'],
  ['16:28:50', '8120', '1 120,00'],
  ['17:54:07', '8160', '1 260,00'],
  ['18:26:12', '8185', '301,28'],
  ['18:27:37', '8187', '669,50'],
]

const PostedIcon = () => (
  <svg viewBox="0 0 16 14" className="h-[14px] w-4">
    <path d="M1.5 1.5h11v8h-3v2h-8z" fill="#f4f8fa" stroke="#8598a6" />
    <path d="M4 4.5h6M4 6.5h6M4 8.5h4" stroke="#8598a6" />
    <path d="M8 9l3 3.5L15 7" fill="none" stroke="#39a85c" strokeWidth="2.2" />
  </svg>
)

const ReceiptListWindow = () => (
  <section className="absolute top-0 left-[1039px] h-[400px] w-[787px] bg-[#a4a4a4] p-[2px] pt-0">
    <div className="h-full border border-t-0 border-[#6e6e6e] bg-[#fffcf0] pt-[9px] pr-[9px] pb-2 pl-2">
      <div className="grid h-full grid-cols-[1fr_16px] grid-rows-[1fr_15px] overflow-hidden border border-[#b5ae8c] bg-white">
        <div className="min-w-0 overflow-hidden">
          <table className="w-full table-fixed border-separate border-spacing-0">
            <colgroup>
              <col className="w-8" />
              <col className="w-[132px]" />
              <col className="w-20" />
              <col className="w-[90px]" />
              <col className="w-[100px]" />
              <col className="w-[90px]" />
              <col className="w-[90px]" />
              <col className="w-[90px]" />
              <col />
            </colgroup>
            <thead>
              <tr className={`h-[21px] ${HEAD_BG}`}>
                <th className={TH} />
                <th className={TH}>
                  <span className="flex items-center justify-between pr-2">
                    Дата
                    <svg viewBox="0 0 12 8" className="h-2 w-3"><path d="M6 1l5 6H1zM3 5h6" fill="#d9d4bb" stroke="#a9a487" /></svg>
                  </span>
                </th>
                <th className={TH}>Номер</th>
                <th className={TH}>Вид операции</th>
                <th className={TH}>Сумма (руб.)</th>
                <th className={TH}>Касса ККМ</th>
                <th className={TH}>Склад</th>
                <th className={TH}>Ответственный</th>
                <th className={`${TH} border-r-0`}>Коммен</th>
              </tr>
            </thead>
            <tbody>
              {RECEIPTS.map(([time, no, sum]) => (
                <tr key={no} className="h-[19px]">
                  <td className={TD}><PostedIcon /></td>
                  <td className={TD}>03.02.2020 {time}</td>
                  <td className={no === '8120' ? `${TD} bg-[#7096cc] text-white` : TD}>UT00000{no}</td>
                  <td className={TD}>продажа</td>
                  <td className={`${TD} text-right`}>{sum}</td>
                  <td className={TD}>Касса_2</td>
                  <td className={TD}>Магазин №1</td>
                  <td className={TD}>Кассир_2</td>
                  <td className={`${TD} border-r-0`} />
                </tr>
              ))}
            </tbody>
          </table>
        </div>
        <div className="flex flex-col border-l border-[#c9c3a4] bg-[#fbfaf5]">
          <ScrollButton dir="up" label="Вверх" />
          <div className="h-[152px]" />
          <div className="h-[15px] border-y border-[#c9c3a4] bg-[#eee9c8]" />
          <div className="flex-1" />
          <ScrollButton dir="down" label="Вниз" />
        </div>
        <div className="flex border-t border-[#c9c3a4] bg-[#fbfaf5]">
          <ScrollButton dir="left" label="Влево" />
          <div className="w-[661px] border-r border-[#c9c3a4] bg-linear-to-b from-[#f6f2da] to-[#e6dfb9]" />
          <div className="flex-1" />
          <ScrollButton dir="right" label="Вправо" />
        </div>
        <div className="border-t border-[#c9c3a4]" />
      </div>
    </div>
  </section>
)

const BarcodeIcon = () => (
  <svg viewBox="0 0 16 12" className="h-3 w-4">
    <path d="M0 0h16v12H0z" fill="#2fbf86" />
    <path d="M2 0v12M14 0v12" stroke="#8fe0be" strokeDasharray="1 1" />
    <path d="M5 0h6v12H5z" fill="#e4efe8" stroke="#1c3328" strokeWidth=".8" />
    <path d="M6.5 1l3 2.5-3 2.5 3 2.5-3 2.5M9.5 1l-3 2.5 3 2.5-3 2.5 3 2.5" fill="none" stroke="#111" />
  </svg>
)

const CheckToolbar = () => (
  <div className="flex h-[25px] shrink-0 items-center border-b border-[#c9c3a4] bg-linear-to-b from-[#fbf8e8] to-[#f0ebd3] pl-[3px] text-[#4c3f12]">
    <button type="button" className="mr-1 text-[#a79f78]">Операция<Caret faded /></button>
    <Sep />
    <button type="button" className="mx-1">Цены и валюта...</button>
    <Sep />
    <button type="button" className="mx-1">Действия<Caret /></button>
    <Sep />
    <Tool label="Перечитать">
      <svg viewBox="0 0 16 16" className="h-4 w-4">
        <path d="M2.5 .5h10v14h-10z" fill="#eef6fb" stroke="#7d99b3" />
        <path d="M5 3.5h6M5 5.5h6M5 7.5h6" stroke="#7d99b3" />
        <path d="M16 11H9v3.5L4 11l5-4v3h7z" fill="#2d7aa8" />
      </svg>
    </Tool>
    <Sep />
    <Tool label="Обновить">
      <svg viewBox="0 0 16 16" className="h-4 w-4">
        <path d="M1.5 2.5h13v11h-13z" fill="#fff" stroke="#5c7fa3" />
        <path d="M1 3h14" stroke="#5c7fa3" strokeWidth="2" />
        <path d="M4 9c1-4 6-3 7-1M12 9c-1 4-6 3-7 1" fill="none" stroke="#2c8b3c" strokeWidth="1.5" />
      </svg>
    </Tool>
    <Tool label="Копировать">
      <svg viewBox="0 0 16 16" className="h-4 w-4" fill="#f4faf4" stroke="#7d9d8c">
        <path d="M1.5 .5h8v11h-8zM4.5 3.5h7l2 2v10h-9z" />
        <circle cx="11" cy="11.5" r="3.5" fill="#bfe0b8" stroke="#5ca05c" />
        <path d="M11 9.5v4M9 11.5h4" stroke="#2c8b3c" />
      </svg>
    </Tool>
    <Sep wide />
    <Tool label="Провести"><PostIcon /></Tool>
    <Tool label="Отменить проведение"><PostIcon up /></Tool>
    <Sep wide />
    <Tool label="На основании">
      <svg viewBox="0 0 16 16" className="h-4 w-4">
        <path d="M1.5 1.5h6v9h-6zM7.5 5.5h6v10h-6z" fill="#f3f8fc" stroke="#7d99b3" />
        <path d="M3 7h5V3.5L13 8.5 8 13V10H3z" fill="#2d5f9a" />
      </svg>
    </Tool>
    <Caret tight />
    <Sep />
    <button type="button" className="mx-1">Перейти<Caret /></button>
    <Sep />
    <span className="mx-1"><HelpButton /></span>
    <Sep />
    <Tool label="Список">
      <svg viewBox="0 0 16 16" className="h-4 w-4" fill="#fff" stroke="#666">
        <path d="M.5 1.5h15v3H.5zM.5 6.5h15v3H.5zM.5 11.5h15v3H.5z" />
        <path d="M13.5 2v12" stroke="#555" strokeWidth="2.5" />
      </svg>
    </Tool>
    <Tool label="Настройка">
      <svg viewBox="0 0 16 16" className="h-4 w-4" fill="#fff" stroke="#444">
        <path d="M.5 1.5h4v4h-4zM.5 9.5h4v4h-4z" />
        <path d="M7 2h9M7 10h9" stroke="#2a5ed0" strokeWidth="2" />
        <path d="M7 5h5M7 13h5" stroke="#2a5ed0" strokeWidth="2" />
      </svg>
    </Tool>
  </div>
)

const SortIcon = ({ top, bottom }: { top: string; bottom: string }) => (
  <svg viewBox="0 0 16 16" className="h-4 w-4" fill="#888">
    <text x="1" y="7" fontSize="9" fontFamily="Liberation Serif, serif">{top}</text>
    <text x="1" y="16" fontSize="9" fontFamily="Liberation Serif, serif">{bottom}</text>
    <path d="M12 3v10M9.5 10.5l2.5 3.5 2.5-3.5" fill="none" stroke="#888" />
  </svg>
)

const GoodsToolbar = () => (
  <div className="flex h-[24px] items-center text-[#5a4a1c]">
    <Tool label="Добавить">
      <svg viewBox="0 0 16 16" className="h-4 w-4">
        <circle cx="8" cy="8" r="7.5" fill="#b9bfb4" />
        <path d="M8 4v8M4 8h8" stroke="#e9ece6" strokeWidth="2" />
      </svg>
    </Tool>
    <Tool label="Скопировать">
      <svg viewBox="0 0 16 16" className="h-4 w-4">
        <path d="M1.5 1.5h8l2 2v10h-10z" fill="#cdd0d2" stroke="#b2b6b9" />
        <circle cx="11" cy="11" r="4" fill="#b5bbb0" />
        <path d="M11 9v4M9 11h4" stroke="#eee" />
      </svg>
    </Tool>
    <Tool label="Изменить"><PencilIcon color="#a8aca4" /></Tool>
    <Tool label="Удалить"><CrossIcon color="#b8b8b4" /></Tool>
    <Tool label="Закончить"><SaveIcon color="#a3adb8" inner="#b5bec8" /></Tool>
    <Tool label="Вверх"><ArrowIcon /></Tool>
    <Tool label="Вниз"><ArrowIcon down /></Tool>
    <Tool label="По возрастанию"><SortIcon top="А" bottom="Я" /></Tool>
    <Tool label="По убыванию"><SortIcon top="Я" bottom="А" /></Tool>
    <Tool label="Штрихкод">
      <svg viewBox="0 0 16 16" className="h-4 w-4">
        <path d="M1 1v12M3.5 1v12M6 1v9M8 1v5M10.5 1v4M13 1v5M15 1v12" stroke="#3d3424" strokeWidth="1.3" />
        <circle cx="10" cy="9.5" r="3" fill="#e8f1f8" stroke="#888" />
        <path d="M12 12l3 3.5" stroke="#888" strokeWidth="1.5" />
      </svg>
    </Tool>
    <Sep />
    <button type="button" className="mx-1">Проверить<Caret /></button>
    <Sep />
    <button type="button" className="mx-[6px] text-[#a79f78]">Подбор</button>
    <Sep />
    <button type="button" className="ml-[2px] flex items-center text-[#8f8764]">
      <BookIcon />
      Состав набора
    </button>
  </div>
)

const GOODS_HEAD = ['Номенклатура', 'Х...', 'С...', 'Количест...', 'Ед.', 'К.', 'Цена', 'Сумма ...', '% Руч.с']

const CheckWindow = () => (
  <section className="absolute top-[414px] left-[357px] flex h-[463px] w-[659px] flex-col bg-[#cbcbcb] p-[2px] pt-0 shadow-[inset_-1px_-1px_0_0_#a0a0a0]">
    <header className="flex h-[21px] shrink-0 items-center">
      <NewIcon lined className="ml-[2px] h-4 w-4" />
      <h2 className="ml-1 flex-1 text-[12px] font-bold text-[#3a3a3a]">Чек ККМ: продажа. Проведен (архивный) *</h2>
      <WindowControls color="#222" />
    </header>
    <div className="flex min-h-0 flex-1 flex-col border border-[#6e6e6e] bg-[#fffcf0]">
      <CheckToolbar />
      <div className="flex-1 pt-[7px] pr-[9px] pl-2">
        <div className="grid grid-cols-[102px_220px_1fr] gap-y-[5px]">
          <label htmlFor="number" className={`self-center ${LABEL}`}>Номер:</label>
          <div className="flex items-center">
            <Field id="number" value="UT000008120" className="w-[79px]" selected />
            <label htmlFor="date" className={`w-5 text-center ${LABEL}`}>от:</label>
            <Field id="date" value="03.02.2020 16:28:50" className="w-[121px]" buttons={['calendar']} />
          </div>
          <div className="flex items-center">
            <label htmlFor="desk" className={`w-[72px] pl-[7px] ${LABEL}`}>Касса ККМ:</label>
            <Field id="desk" value="Касса_2" className="flex-1" plain buttons={['dots', 'loupe']} />
          </div>
          <label htmlFor="store" className={`self-center ${LABEL}`}>Склад:</label>
          <Field id="store" value="Магазин №1" buttons={['dots', 'loupe']} />
          <span />
          <label htmlFor="card" className={`self-center ${LABEL}`}>Дисконтная карта:</label>
          <Field id="card" plain buttons={['dots', 'clear', 'loupe']} />
          <div className="flex items-center">
            <span className={`w-[72px] pl-[7px] ${LABEL}`}>Оплата:</span>
            <input type="radio" name="pay" defaultChecked aria-label="Одна оплата" className="m-0 h-[13px] w-[13px] shrink-0 appearance-none rounded-full border border-[#9a9478] bg-white bg-[radial-gradient(circle,#333_0_2px,transparent_3px)]" />
            <Field id="pay" value="Наличные" className="ml-[3px] w-[158px]" buttons={['dots', 'loupe']} />
            <label className="ml-[5px] flex items-center gap-px text-[#5a4a1c]">
              <input type="radio" name="pay" className="m-0 h-[13px] w-[13px] shrink-0 appearance-none rounded-full border border-[#9a9478] bg-white" />
              Списком
            </label>
          </div>
        </div>
        <div role="tablist" className="mt-[9px] flex h-[19px] gap-[6px]">
          <button type="button" role="tab" className="-mb-px w-[59px] rounded-t-md border border-b-0 border-[#b5ae8c] bg-[#fffcf0] text-[#5a4a1c]">Товары</button>
          <button type="button" role="tab" className="w-[100px] rounded-t-md border border-b-0 border-[#c5bfa5] bg-[#e9e4cb] text-[#5a4a1c]">Дополнительно</button>
        </div>
        <div className="border border-[#b5ae8c] p-[6px]">
          <GoodsToolbar />
          <div className="flex h-[169px] flex-col border border-[#b5ae8c] bg-white">
            <table className="w-full table-fixed border-separate border-spacing-0">
              <colgroup>
                <col className="w-[30px]" />
                <col className="w-8" />
                <col className="w-[188px]" />
                <col className="w-[25px]" />
                <col className="w-[25px]" />
                <col className="w-[65px]" />
                <col className="w-[45px]" />
                <col className="w-8" />
                <col className="w-20" />
                <col className="w-[59px]" />
                <col />
              </colgroup>
              <thead>
                <tr className={`h-[21px] ${HEAD_BG}`}>
                  <th className={TH}>№</th>
                  <th className={TH}><BarcodeIcon /></th>
                  {GOODS_HEAD.map((title) => (
                    <th key={title} className={TH}>{title}</th>
                  ))}
                </tr>
              </thead>
              <tbody>
                <tr className="h-[19px]">
                  <td className={`${TD} text-right`}>1</td>
                  <td className={TD}><BarcodeIcon /></td>
                  <td className={`${TD} bg-[#7096cc] text-white`}>Водка особая НАЦИОНАЛЬНАЯ ...</td>
                  <td className={TD} />
                  <td className={TD}>&lt;&gt;</td>
                  <td className={`${TD} text-right`}>2,000</td>
                  <td className={TD}>БУТ</td>
                  <td className={`${TD} text-right`}>1,...</td>
                  <td className={`${TD} text-right`}>560,00</td>
                  <td className={`${TD} text-right`}>1 120,00</td>
                  <td className={TD} />
                </tr>
              </tbody>
            </table>
            <div className="mt-auto flex h-[15px] border-t border-[#c9c3a4] bg-[#fbfaf5]">
              <ScrollButton dir="left" label="Влево" />
              <div className="w-[478px] border-r border-[#c9c3a4] bg-linear-to-b from-[#f6f2da] to-[#e6dfb9]" />
              <div className="flex-1" />
              <ScrollButton dir="right" label="Вправо" />
            </div>
          </div>
        </div>
        <div className="mt-2 flex h-[14px] items-center">
          <span className="flex-1 text-[#5a64b4]">Цены АТТ: Магазин №1.</span>
          <span className={LABEL}>Всего (руб.):</span>
          <span className="w-[83px] pr-[2px] text-right text-[12px] font-bold">1 120,00</span>
        </div>
        <div className="mt-[6px] flex items-center">
          <label htmlFor="paid" className={`w-[81px] ${LABEL}`}>Сумма оплаты:</label>
          <button type="button" aria-label="Заполнить сумму" className="mr-[2px] flex h-[19px] w-[19px] shrink-0 items-center justify-center rounded border border-[#a9a285] bg-[#f3efda]">
            <svg viewBox="0 0 14 14" className="h-[14px] w-[14px]"><path d="M1 4.5h6V1.5L13 7l-6 5.5v-3H1z" fill="#7cc0e8" stroke="#3a6a94" /></svg>
          </button>
          <Field id="paid" value="1 120,00" className="w-[90px]" align="pr-[2px] text-right" />
          <span className={`ml-2 ${LABEL}`}>Сдача (руб.):</span>
          <span className="flex-1 pr-[11px] text-right text-[12px] font-bold">0,00</span>
          <span className="w-[73px] font-bold text-[#5a64b4]">Чек пробит</span>
          <span className={`w-[70px] ${LABEL}`}>Номер чека:</span>
          <span className="w-[47px] text-[12px] font-bold text-[#5a64b4]">34 404</span>
          <span className={`w-[82px] ${LABEL}`}>Номер секции:</span>
          <span className="w-[17px] text-right font-bold text-[#5a64b4]">1</span>
        </div>
        <div className="mt-[5px] flex items-center">
          <label htmlFor="note" className={`w-[81px] ${LABEL}`}>Комментарий:</label>
          <Field id="note" className="flex-1" plain />
        </div>
      </div>
      <footer className="flex h-[25px] shrink-0 items-center justify-end gap-[5px] border-t border-[#b5ae8c] bg-[#f5f1e0] pr-2 text-[#4c3f12]">
        <button type="button">Чек</button>
        <Sep wide />
        <button type="button">Печать</button>
        <Sep />
        <button type="button" className="flex items-center gap-[3px] text-[#a79f78]">
          <svg viewBox="0 0 16 12" className="h-3 w-4" fill="#b3b0a8"><circle cx="5" cy="4.5" r="4" /><ellipse cx="11" cy="8" rx="4.5" ry="3.5" /></svg>
          Чек ККМ
        </button>
        <Sep />
        <button type="button" className="text-[12px] font-bold">OK</button>
        <Sep />
        <button type="button" className="text-[#a79f78]">Записать</button>
        <Sep />
        <button type="button">Закрыть</button>
      </footer>
    </div>
  </section>
)

const WINDOWS: [title: string, lined: boolean][] = [
  ['Обмен с ЕГАИС', false],
  ['Протокол обмена ЕГАИС', false],
  ['479b871b-9b17-4ef7-9aa7-4b...', false],
  ['Чеки ККМ: 3 февраля 2020 г.', true],
  ['...: продажа. Проведен (арх...', true],
]

const WindowBar = () => (
  <div className="flex h-6 shrink-0 items-start gap-[2px] border-t border-[#dedac6] bg-[#f5f1e0] pt-px">
    {WINDOWS.map(([title, lined], i) => (
      <button
        key={title}
        type="button"
        className={`flex h-5 w-[171px] items-center gap-px border pl-[2px] whitespace-nowrap text-[#333] ${
          i === 4 ? 'border-[#9bb0c4] bg-[#b4cbe4]' : 'border-[#a5a297] bg-[#b4b2ac]'
        }`}
      >
        <NewIcon lined={lined} />
        {title}
      </button>
    ))}
  </div>
)

const StatusBar = () => (
  <div className="flex h-5 shrink-0 items-start gap-1 border-t border-[#dedac6] bg-[#f5f1e0] pt-px text-[#4c3f12]">
    <span className="flex-1 pt-px pl-1">Для получения подсказки нажмите F1</span>
    <span className="w-7 border border-[#dedac6] text-center text-[#a79f78]">CAP</span>
    <span className="mr-px w-[33px] border border-[#dedac6] text-center">NUM</span>
  </div>
)

const TASK = 'flex h-[38px] w-[58px] items-center justify-center rounded-sm'

const TrayIcons = () => (
  <div className="flex items-center gap-2">
    <svg viewBox="0 0 16 16" className="h-4 w-4"><path d="M0 1h16v14H0z" fill="#f59a23" /><path d="M0 1h4v14H0z" fill="#f7c15a" /><path d="M4 7l4 4 6-8" fill="none" stroke="#fff" strokeWidth="2" /></svg>
    <svg viewBox="0 0 16 16" className="h-4 w-4">
      <rect x=".5" y=".5" width="15" height="15" rx="2" fill="#fff" />
      <text x="8" y="13" fontSize="14" textAnchor="middle" fill="#111" fontFamily="Liberation Sans, sans-serif" fontWeight="bold">
        F
      </text>
    </svg>
    <svg viewBox="0 0 16 16" className="h-4 w-4"><circle cx="8" cy="8" r="7.5" fill="#d8474e" /><path d="M4.5 4v8M7.5 4v8M4.500 8h3M7.5 8.500c5-1 5 3.500 0 3.500" fill="none" stroke="#fff" strokeWidth="1.3" /></svg>
    <svg viewBox="0 0 16 16" className="h-4 w-4"><path d="M8 1l2 3 5-2-2 5 2 3-4 1-3 4-3-4-4-1 2-3-2-5 5 2z" fill="#d7a52a" stroke="#6b4a08" strokeWidth=".8" /><path d="M6 6h4v4l-2 2-2-2z" fill="#c01f1f" /></svg>
    <svg viewBox="0 0 16 16" className="h-4 w-4"><circle cx="8" cy="8" r="7.5" fill="#3fae49" stroke="#8fce8f" /><path d="M6 12c4-1 6-4 4-8 4 2 3 8-4 8z" fill="#fff" /></svg>
    <svg viewBox="0 0 16 16" className="h-4 w-4"><path d="M2 1h5v9H2zM3 10h3v5H3z" fill="#9aa4ad" /><circle cx="11" cy="10.5" r="4.5" fill="#2fa83c" /><path d="M9 10.5l2 2 3-4" fill="none" stroke="#fff" strokeWidth="1.5" /></svg>
    <svg viewBox="0 0 16 16" className="h-4 w-4"><path d="M0 2h16v11H0z" fill="#d7d7d7" /><path d="M2 5h11v4H2z" fill="#4a4a4a" /><path d="M0 12h12v2H0z" fill="#d84a3a" /></svg>
    <svg viewBox="0 0 16 16" className="h-4 w-4"><path d="M0 0h16v16H0z" fill="#1e36c8" /><path d="M2 1h12v11l-3 3H2z" fill="#fff" /><path d="M11 3c1 5-2 8-6 9l-1-2c4-1 5-3 5-6z" fill="#1e36c8" /></svg>
    <svg viewBox="0 0 16 16" className="h-4 w-4"><path d="M1 5h3l5-4v13l-5-4H1z" fill="#e8ecf0" /><circle cx="11.5" cy="11" r="4" fill="#fff" stroke="#d0201e" strokeWidth="1.5" /><path d="M9 8.5l5 5" stroke="#d0201e" strokeWidth="1.5" /></svg>
    <svg viewBox="0 0 16 16" className="h-4 w-4" fill="none" stroke="#fff"><path d="M4.5 4.5h11v8h-11zM7 15h6M10 12.5V15" strokeWidth="1.3" /><path d="M1 1v4h3V1M2.5 5v8h2" /></svg>
  </div>
)

const Taskbar = () => (
  <footer className="flex h-10 shrink-0 items-center border-t border-[#5a7fae] bg-[linear-gradient(90deg,#0a2c52_0%,#0c3468_10%,#0a2f68_25%,#0f3878_34%,#1c4c8e_42%,#3262a2_53%,#0b2c62_54%,#02225a_57%,#0f3f84_58%,#4272b8_59%,#0d357a_60%,#02225a_62%,#0c3068_66%,#0f3c80_72%,#123f80_78%,#03255a_81%,#052552_100%)] text-white">
    <button type="button" aria-label="Пуск" className="ml-2 h-[38px] w-[38px]">
      <svg viewBox="0 0 38 38" className="h-[38px] w-[38px]">
        <defs>
          <radialGradient id="orb" cx=".5" cy=".9" r=".9">
            <stop offset="0" stopColor="#7fe0f5" />
            <stop offset=".5" stopColor="#1f6fa8" />
            <stop offset="1" stopColor="#8aa5b8" />
          </radialGradient>
        </defs>
        <circle cx="19" cy="19" r="17.5" fill="url(#orb)" stroke="#0f3a5c" />
        <path d="M11 12c3-2 5-2 7-1l-1.5 7c-2-1-4-1-7 .5z" fill="#e8562a" />
        <path d="M19.5 11.5c3 1.5 5 1 8-.5l-2 7.5c-2.5 1-5 1-7.5 0z" fill="#8dc63f" />
        <path d="M9 20c3-1.5 5-1.5 7-.5l-2 7c-2-1-4-1-7 .5z" fill="#3da5e0" />
        <path d="M17.5 20c2.5 1.5 5 1 7.5 0l-2 7c-2.5 1.5-5 1.5-7.5 0z" fill="#fbc82d" />
      </svg>
    </button>
    <button type="button" aria-label="Проводник" className={`${TASK} ml-[14px] border border-[#fff3c0] bg-linear-to-br from-[#f9e08a] via-[#efc04c] to-[#cf8f28]`}>
      <svg viewBox="0 0 34 30" className="h-[30px] w-[34px]">
        <path d="M2 6V3h10l2 3h15v18H2z" fill="#f5d777" stroke="#d0a544" />
        <path d="M8 3h8v4H8zM19 3h8v4h-8z" fill="#fff" stroke="#9fb8a0" strokeWidth=".8" />
        <path d="M9 4h3M20 4h3" stroke="#4c9b3c" strokeWidth="1.5" />
        <path d="M4 9h28l-2 16H3z" fill="#fbe9a8" stroke="#d8b458" />
        <path d="M7 29v-9c0-3 3-4 5-4h10c3 0 5 1 5 4v9h-4v-7H11v7z" fill="#9fd4ee" stroke="#5a9cc2" />
      </svg>
    </button>
    <button type="button" aria-label="Медиаплеер" className={`${TASK} ml-[3px]`}>
      <svg viewBox="0 0 28 28" className="h-7 w-7">
        <path d="M7 3h19v21H7z" fill="#6db0dc" stroke="#2c6a9c" />
        <path d="M2 5h19v21H2z" fill="#a6d4ef" stroke="#4a8ab8" />
        <circle cx="12" cy="15" r="8.5" fill="#f07f1a" stroke="#fff" />
        <path d="M9.5 10l7 5-7 5z" fill="#fff" />
      </svg>
    </button>
    <button type="button" aria-label="Internet Explorer" className={`${TASK} ml-[3px]`}>
      <svg viewBox="0 0 32 32" className="h-8 w-8" fill="none">
        <path d="M8 17.500h17.500c0-12-16.500-12-17 0-.5 9.500 12 12 15.500 4.500" stroke="#35b4ee" strokeWidth="5" />
        <path d="M4 29C-2 23 18 1 29 3c2 1 1 4-1 7" stroke="#f5c32c" strokeWidth="2.5" />
      </svg>
    </button>
    <button type="button" aria-label="Chrome" className={`${TASK} ml-[5px] border border-[#7f9cc4] bg-linear-to-br from-[#a5b5d0] to-[#3d5e96]`}>
      <svg viewBox="0 0 32 32" className="h-8 w-8">
        <circle cx="16" cy="16" r="14" fill="#fbc116" />
        <path d="M16 16L3.9 9A14 14 0 0 1 28.1 9z" fill="#e33b2e" />
        <path d="M16 16L3.9 9A14 14 0 0 0 15 30l6-9z" fill="#2da94f" />
        <path d="M16 9h12.1A14 14 0 0 0 3.9 9L10 19z" fill="#e33b2e" />
        <circle cx="16" cy="16" r="6.8" fill="#fff" />
        <circle cx="16" cy="16" r="5.3" fill="#3f83f0" />
      </svg>
    </button>
    <button type="button" aria-label="1С:Предприятие" className={`${TASK} ml-1 border border-[#dfe7f2] bg-linear-to-br from-[#c5cfe0] to-[#93a6c6]`}>
      <svg viewBox="0 0 32 32" className="h-8 w-8">
        <circle cx="16" cy="16" r="14.5" fill="#fde06a" stroke="#e8b53a" />
        <path d="M4 13l4-3v11M21 13c-1-4-9-4-9 2.5s6 5.5 18 5.5M19 14c-1-2-4-2-4 1.5s4 3 14 3" fill="none" stroke="#d2231a" strokeWidth="2" />
      </svg>
    </button>
    <button type="button" aria-label="Paint" className={`${TASK} ml-1 border border-[#6f8ebc] bg-linear-to-br from-[#8fa5c8] to-[#37588f]`}>
      <svg viewBox="0 0 34 32" className="h-8 w-[34px]">
        <path d="M3 19C3 11 12 6 20 8c8 1 11 7 8 13-3 7-11 9-13 8-3-1 0-4-3-5-4-1-9 0-9-5z" fill="#d9e8f2" stroke="#7d9ab5" />
        <circle cx="9" cy="17" r="2.5" fill="#3a62c8" />
        <circle cx="14" cy="12" r="2.5" fill="#4aae4a" />
        <circle cx="21" cy="12" r="2.5" fill="#e8b52a" />
        <circle cx="20" cy="24" r="2.5" fill="#d8432e" />
        <path d="M23 26L28 7" stroke="#d98b3a" strokeWidth="2.5" />
        <path d="M26 8l1-7 5 2-2 6z" fill="#a8703a" />
      </svg>
    </button>
    <span className="mr-[14px] mb-1 ml-auto font-['Roboto','Noto_Sans',sans-serif] text-[12px]">RU</span>
    <TrayIcons />
    <time className="ml-[18px] w-14 text-center font-['Roboto','Noto_Sans',sans-serif] leading-[17px] whitespace-nowrap">
      9:45
      <br />
      04.02.2020
    </time>
    <button type="button" aria-label="Показать рабочий стол" className="mr-[2px] ml-3 h-[38px] w-3 border border-[#3f608f] bg-linear-to-b from-[#5f7da8] to-[#12346a]" />
  </footer>
)

export default function App() {
  return (
    <div className="flex h-screen flex-col overflow-hidden bg-[#f5f1e0] font-['Liberation_Sans',Arial,sans-serif] text-[11px] leading-[14px] text-black">
      <TitleBar />
      <Toolbars />
      <main className="relative min-h-0 flex-1">
        <ExchangeLog />
        <ReceiptListWindow />
        <MessageWindow />
        <CheckWindow />
      </main>
      <WindowBar />
      <StatusBar />
      <Taskbar />
    </div>
  )
}
